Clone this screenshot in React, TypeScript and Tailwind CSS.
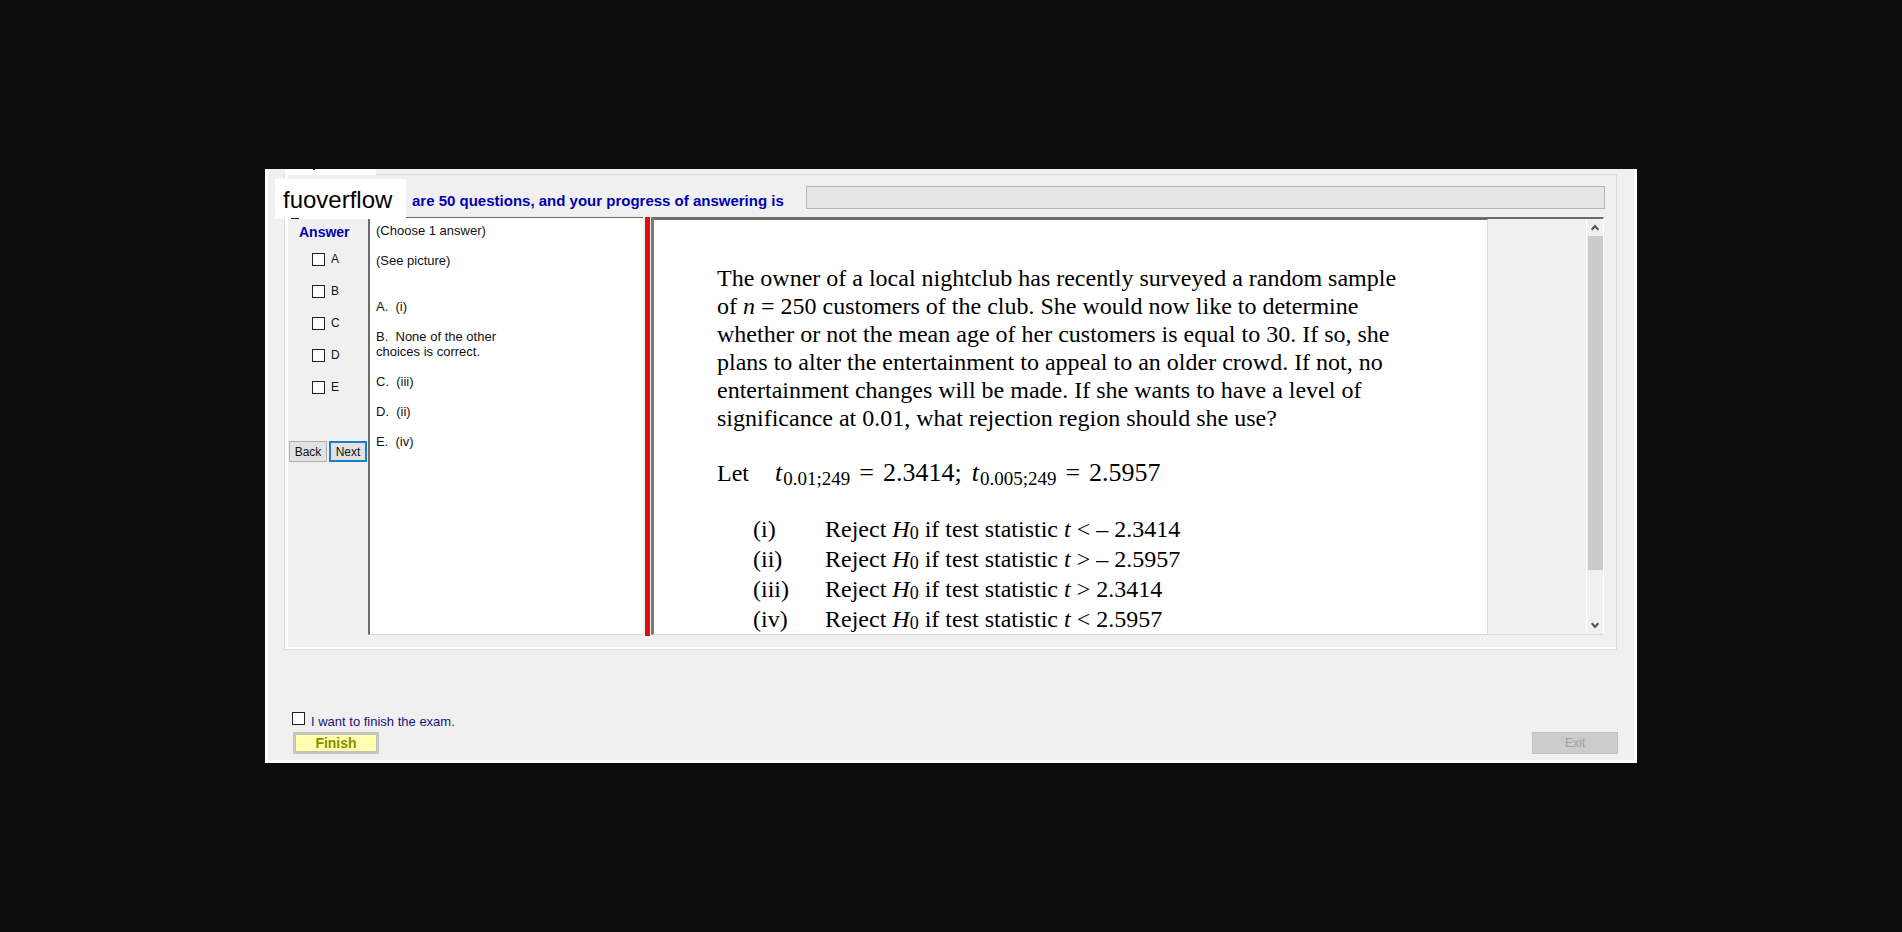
import { useState } from "react";

const letters = ["A", "B", "C", "D", "E"];

const choices = ["A.  (i)", "B.  None of the other choices is correct.", "C.  (iii)", "D.  (ii)", "E.  (iv)"];

const regions = [
  { mark: "(i)", rule: "< – 2.3414" },
  { mark: "(ii)", rule: "> – 2.5957" },
  { mark: "(iii)", rule: "> 2.3414" },
  { mark: "(iv)", rule: "< 2.5957" },
];

const boxClass = "size-[13px] shrink-0 appearance-none border border-[#222] bg-white checked:bg-[#222]";

function Arrow({ up }: { up?: boolean }) {
  return (
    <svg viewBox="0 0 8 7" className="h-[7px] w-2" fill="none" stroke="#505050" strokeWidth="2">
      <path d={up ? "M0.7 5.8 4 2l3.3 3.8" : "M0.7 1.2 4 5l3.3-3.8"} />
    </svg>
  );
}

function Statistic({ sub, value }: { sub: string; value: string }) {
  return (
    <span className="flex items-baseline">
      <i>t</i>
      <span className="relative top-1 ml-px text-[19px] leading-none">{sub}</span>
      <span className="mx-[9px]">=</span>
      <span>{value}</span>
    </span>
  );
}

function AnswerColumn() {
  const [picked, setPicked] = useState<string[]>([]);
  const toggle = (l: string) => setPicked((p) => (p.includes(l) ? p.filter((x) => x !== l) : [...p, l]));
  return (
    <div className="flex w-20 shrink-0 flex-col pt-[7px]">
      <h2 className="pl-[11px] text-sm leading-4 font-bold text-[#0000b4]">Answer</h2>
      <div className="flex flex-col gap-4 pt-[11px] pl-6">
        {letters.map((l) => (
          <label key={l} className="flex h-4 items-center gap-1.5 text-xs">
            <input type="checkbox" className={boxClass} checked={picked.includes(l)} onChange={() => toggle(l)} />
            {l}
          </label>
        ))}
      </div>
      <div className="mt-[46px] flex gap-0.5 pl-px">
        <button className="h-[21px] w-[38px] border border-[#b0b0b0] bg-[#e2e2e2] text-xs leading-none">Back</button>
        <button className="h-[21px] w-[38px] border-2 border-[#1a7fc4] bg-[#e2e2e2] text-xs leading-none">Next</button>
      </div>
    </div>
  );
}

function Question() {
  return (
    <div className="flex min-w-0 flex-1 border-t-2 border-r border-b border-l-3 border-t-[#6c6c6c] border-r-white border-b-[#dcdcdc] border-l-[#7a7a7a]">
      <article className="max-w-[834px] flex-1 border-t border-r border-t-[#6c6c6c] border-r-[#dcdcdc] bg-white pt-11 pl-[63px] font-['Liberation_Serif',serif] text-2xl text-black">
        <p className="max-w-[690px] leading-7">
          The owner of a local nightclub has recently surveyed a random sample of <i>n</i> = 250 customers of the club.
          She would now like to determine whether or not the mean age of her customers is equal to 30. If so, she plans
          to alter the entertainment to appeal to an older crowd. If not, no entertainment changes will be made. If she
          wants to have a level of significance at 0.01, what rejection region should she use?
        </p>
        <div className="mt-[25px] flex items-baseline leading-8">
          <span className="mr-[26px]">Let</span>
          <div className="flex gap-2.5 text-[26px]">
            <Statistic sub="0.01;249" value="2.3414;" />
            <Statistic sub="0.005;249" value="2.5957" />
          </div>
        </div>
        <ul className="mt-[25px] pl-9 leading-[30px]">
          {regions.map((r) => (
            <li key={r.mark} className="flex">
              <span className="w-[72px]">{r.mark}</span>
              <span>
                Reject <i>H</i>
                <span className="relative top-0.5 text-lg leading-none">0</span> if test statistic <i>t</i> {r.rule}
              </span>
            </li>
          ))}
        </ul>
      </article>
      <div className="ml-auto flex w-[17px] flex-col items-center border-l border-white">
        <button aria-label="Scroll up" className="flex h-[17px] w-full items-center justify-center">
          <Arrow up />
        </button>
        <div className="h-[334px] w-[15px] bg-[#cbcbcb]" />
        <button aria-label="Scroll down" className="mt-auto flex h-[17px] w-full items-center justify-center">
          <Arrow />
        </button>
      </div>
    </div>
  );
}

export default function App() {
  const [finished, setFinished] = useState(false);
  return (
    <div className="flex min-h-screen items-center justify-center bg-[#0d0d0d] font-['Liberation_Sans',Arial,sans-serif] text-[#111]">
      <main className="w-full max-w-[1372px] border-x-3 border-b-3 border-white bg-[#f0f0f0] pr-[17px] pl-4">
        <div className="relative z-10 -mb-px ml-px flex h-[6px] w-[91px] bg-white">
          <span className="ml-7 h-px w-0.5 bg-[#111]" />
        </div>
        <section className="relative border border-[#dcdcdc]">
          <div className="border-b-2 border-l-3 border-white pr-3 pb-3">
            <div className="-mr-px flex h-[42px] items-center pt-[3px] pl-[124px]">
              <label htmlFor="progress" className="mt-1.5 text-[15px] leading-4 font-bold text-[#0000b4]">
                are 50 questions, and your progress of answering is
              </label>
              <div id="progress" role="progressbar" aria-valuenow={0} className="ml-[22px] h-[23px] flex-1 border border-[#b4b4b4] bg-[#e5e5e5]" />
            </div>
            <div className="flex">
              <AnswerColumn />
              <div className="w-[275px] shrink-0 border-t border-b border-l-2 border-t-[#6c6c6c] border-b-[#dcdcdc] border-l-[#6c6c6c] bg-white pt-[5px] pl-1.5 text-[13px] leading-[15px]">
                <p>(Choose 1 answer)</p>
                <p className="mt-[15px]">(See picture)</p>
                <ul className="mt-[31px] flex max-w-[130px] flex-col gap-[15px] whitespace-pre-wrap">
                  {choices.map((c) => (
                    <li key={c}>{c}</li>
                  ))}
                </ul>
              </div>
              <div className="mr-px -mb-px ml-0.5 w-[5px] shrink-0 bg-[#e10e10]" />
              <Question />
            </div>
          </div>
          <div className="absolute top-1 -left-[10px] flex h-10 w-[131px] items-center bg-white pt-0.5 pl-2 text-2xl text-black">
            fuoverflow
            <span className="absolute bottom-0 left-4 h-px w-2 bg-[#222]" />
          </div>
        </section>
        <label className="mt-[62px] flex h-4 w-fit items-start gap-1.5 pl-2 text-[13px] leading-5 text-[#1a1080]">
          <input type="checkbox" className={boxClass} checked={finished} onChange={() => setFinished(!finished)} />
          I want to finish the exam.
        </label>
        <div className="mt-1 flex justify-between pb-1.5 pl-[9px]">
          <button className="h-[22px] w-[86px] border-3 border-[#c4c4c0] bg-[#ffffae] text-sm leading-none font-bold text-[#8c8c00]">
            Finish
          </button>
          <button disabled className="-mr-px h-[22px] w-[86px] border border-[#c0c0c0] bg-[#cccccc] text-xs leading-none text-[#a0a0a0]">
            Exit
          </button>
        </div>
      </main>
    </div>
  );
}
